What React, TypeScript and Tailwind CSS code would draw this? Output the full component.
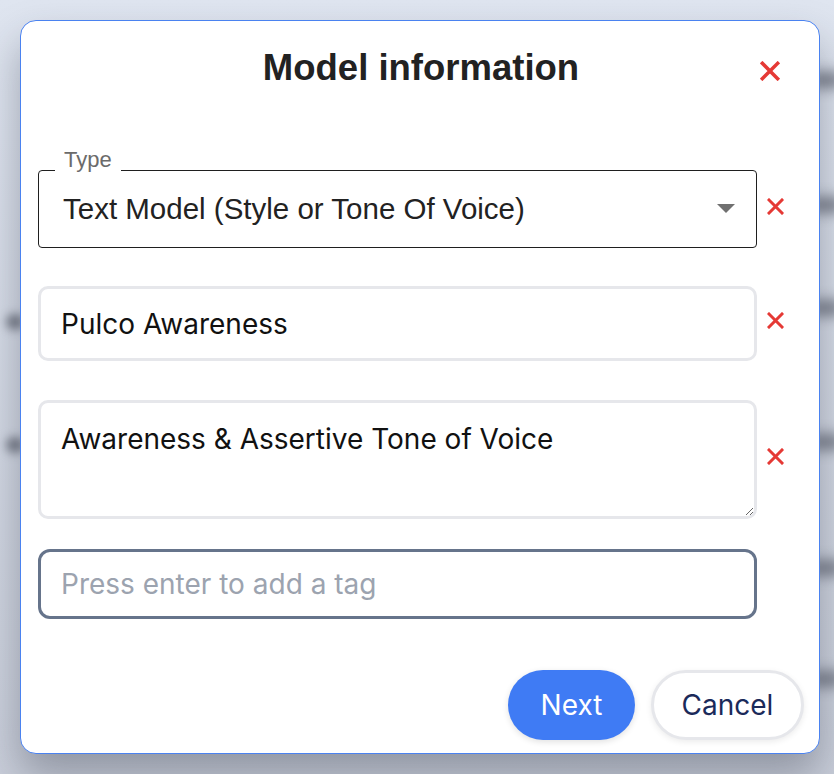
import React, { useState } from 'react';

const RedX = ({ size = 17 }: { size?: number }) => (
  <svg width={size} height={size} viewBox="0 0 17 17" fill="none">
    <path d="M2 2L15 15M15 2L2 15" stroke="#e53935" strokeWidth="3" strokeLinecap="square" />
  </svg>
);

const App: React.FC = () => {
  const [name, setName] = useState('Pulco Awareness');
  const [description, setDescription] = useState('Awareness & Assertive Tone of Voice');
  const [tag, setTag] = useState('');

  return (
    <div className="relative min-h-screen w-full overflow-hidden bg-[#d7dde8] p-5">
      {/* blurred page behind the modal */}
      <div className="absolute inset-0 bg-gradient-to-b from-[#dfe5f0] to-[#c9ceda]" />
      <div className="absolute right-[-10px] top-[72px] h-[16px] w-[36px] rounded-full bg-[#7a7f8c] blur-[7px]" />
      <div className="absolute right-[-10px] top-[197px] h-[16px] w-[36px] rounded-full bg-[#7a7f8c] blur-[7px]" />
      <div className="absolute right-[-10px] top-[300px] h-[16px] w-[36px] rounded-full bg-[#7a7f8c] blur-[7px]" />
      <div className="absolute right-[-10px] top-[434px] h-[16px] w-[36px] rounded-full bg-[#7a7f8c] blur-[7px]" />
      <div className="absolute right-[-10px] top-[560px] h-[16px] w-[36px] rounded-full bg-[#7a7f8c] blur-[7px]" />
      <div className="absolute right-[-10px] top-[671px] h-[16px] w-[36px] rounded-full bg-[#7a7f8c] blur-[7px]" />
      <div className="absolute left-[6px] top-[314px] h-[16px] w-[18px] rounded-full bg-[#7a7f8c] blur-[5px]" />
      <div className="absolute left-[6px] top-[437px] h-[16px] w-[18px] rounded-full bg-[#7a7f8c] blur-[5px]" />

      {/* Modal */}
      <div className="relative flex h-[734px] w-[800px] flex-col rounded-[16px] border border-[#4a82f0] bg-white pl-[17px] pr-[15px] shadow-[0_22px_40px_rgba(40,45,60,0.35)]">
        {/* Header */}
        <div className="relative flex h-[96px] items-start justify-center pt-[26px]">
          <h1 className="text-[36.5px] font-bold leading-[42px] text-[#222222] [font-family:'Liberation_Sans',Arial,sans-serif]">
            Model information
          </h1>
          <button className="absolute right-[24px] top-[40px]">
            <RedX size={20} />
          </button>
        </div>

        {/* Type */}
        <div className="mt-[53px] flex items-center">
          <div className="relative h-[78px] w-[719px] rounded-[4px] border border-[#1f1f1f] [font-family:'Liberation_Sans',Arial,sans-serif]">
            <span className="absolute left-[16px] top-[-23px] h-[26px] bg-white px-[9px] text-[22px] leading-[24px] text-[#6b6b6b]">
              Type
            </span>
            <div className="flex h-full items-center justify-between pl-[24px] pr-[21px]">
              <span className="text-[29.5px] text-[#222222]">Text Model (Style or Tone Of Voice)</span>
              <svg width="18" height="10" viewBox="0 0 18 10">
                <path d="M0 0H18L9 9Z" fill="#707070" />
              </svg>
            </div>
          </div>
          <button className="-mt-[6px] ml-[10px]">
            <RedX />
          </button>
        </div>

        {/* Name */}
        <div className="mt-[38px] flex items-center [font-family:Inter,sans-serif]">
          <input
            value={name}
            onChange={(e) => setName(e.target.value)}
            className="h-[75px] w-[719px] rounded-[10px] border-[3px] border-[#e6e7eb] px-[20px] text-[28px] text-[#111111] outline-none"
          />
          <button className="-mt-[6px] ml-[10px]">
            <RedX />
          </button>
        </div>

        {/* Description */}
        <div className="mt-[39px] flex items-center [font-family:Inter,sans-serif]">
          <textarea
            value={description}
            onChange={(e) => setDescription(e.target.value)}
            className="block h-[119px] w-[719px] resize-y rounded-[10px] border-[3px] border-[#e6e7eb] px-[20px] pt-[19px] text-[28px] leading-[34px] text-[#111111] outline-none"
          />
          <button className="-mt-[6px] ml-[10px]">
            <RedX />
          </button>
        </div>

        {/* Tags */}
        <div className="mt-[30px] flex [font-family:Inter,sans-serif]">
          <input
            value={tag}
            onChange={(e) => setTag(e.target.value)}
            placeholder="Press enter to add a tag"
            className="h-[70px] w-[719px] rounded-[12px] border-[3px] border-[#66748b] px-[20px] text-[28px] text-[#111111] outline-none placeholder:text-[#9ca3af]"
          />
        </div>

        {/* Buttons */}
        <div className="mt-[51px] flex justify-end gap-[16px] [font-family:Inter,sans-serif]">
          <button className="h-[70px] w-[127px] rounded-full bg-[#3f7bf4] text-[28px] text-white shadow-[0_2px_6px_rgba(0,0,0,0.12)]">
            Next
          </button>
          <button className="h-[70px] w-[153px] rounded-full border-[3px] border-[#e6e7eb] bg-white text-[28px] text-[#1b2a5a] shadow-[0_2px_6px_rgba(0,0,0,0.08)]">
            Cancel
          </button>
        </div>
      </div>
    </div>
  );
};

export default App;
